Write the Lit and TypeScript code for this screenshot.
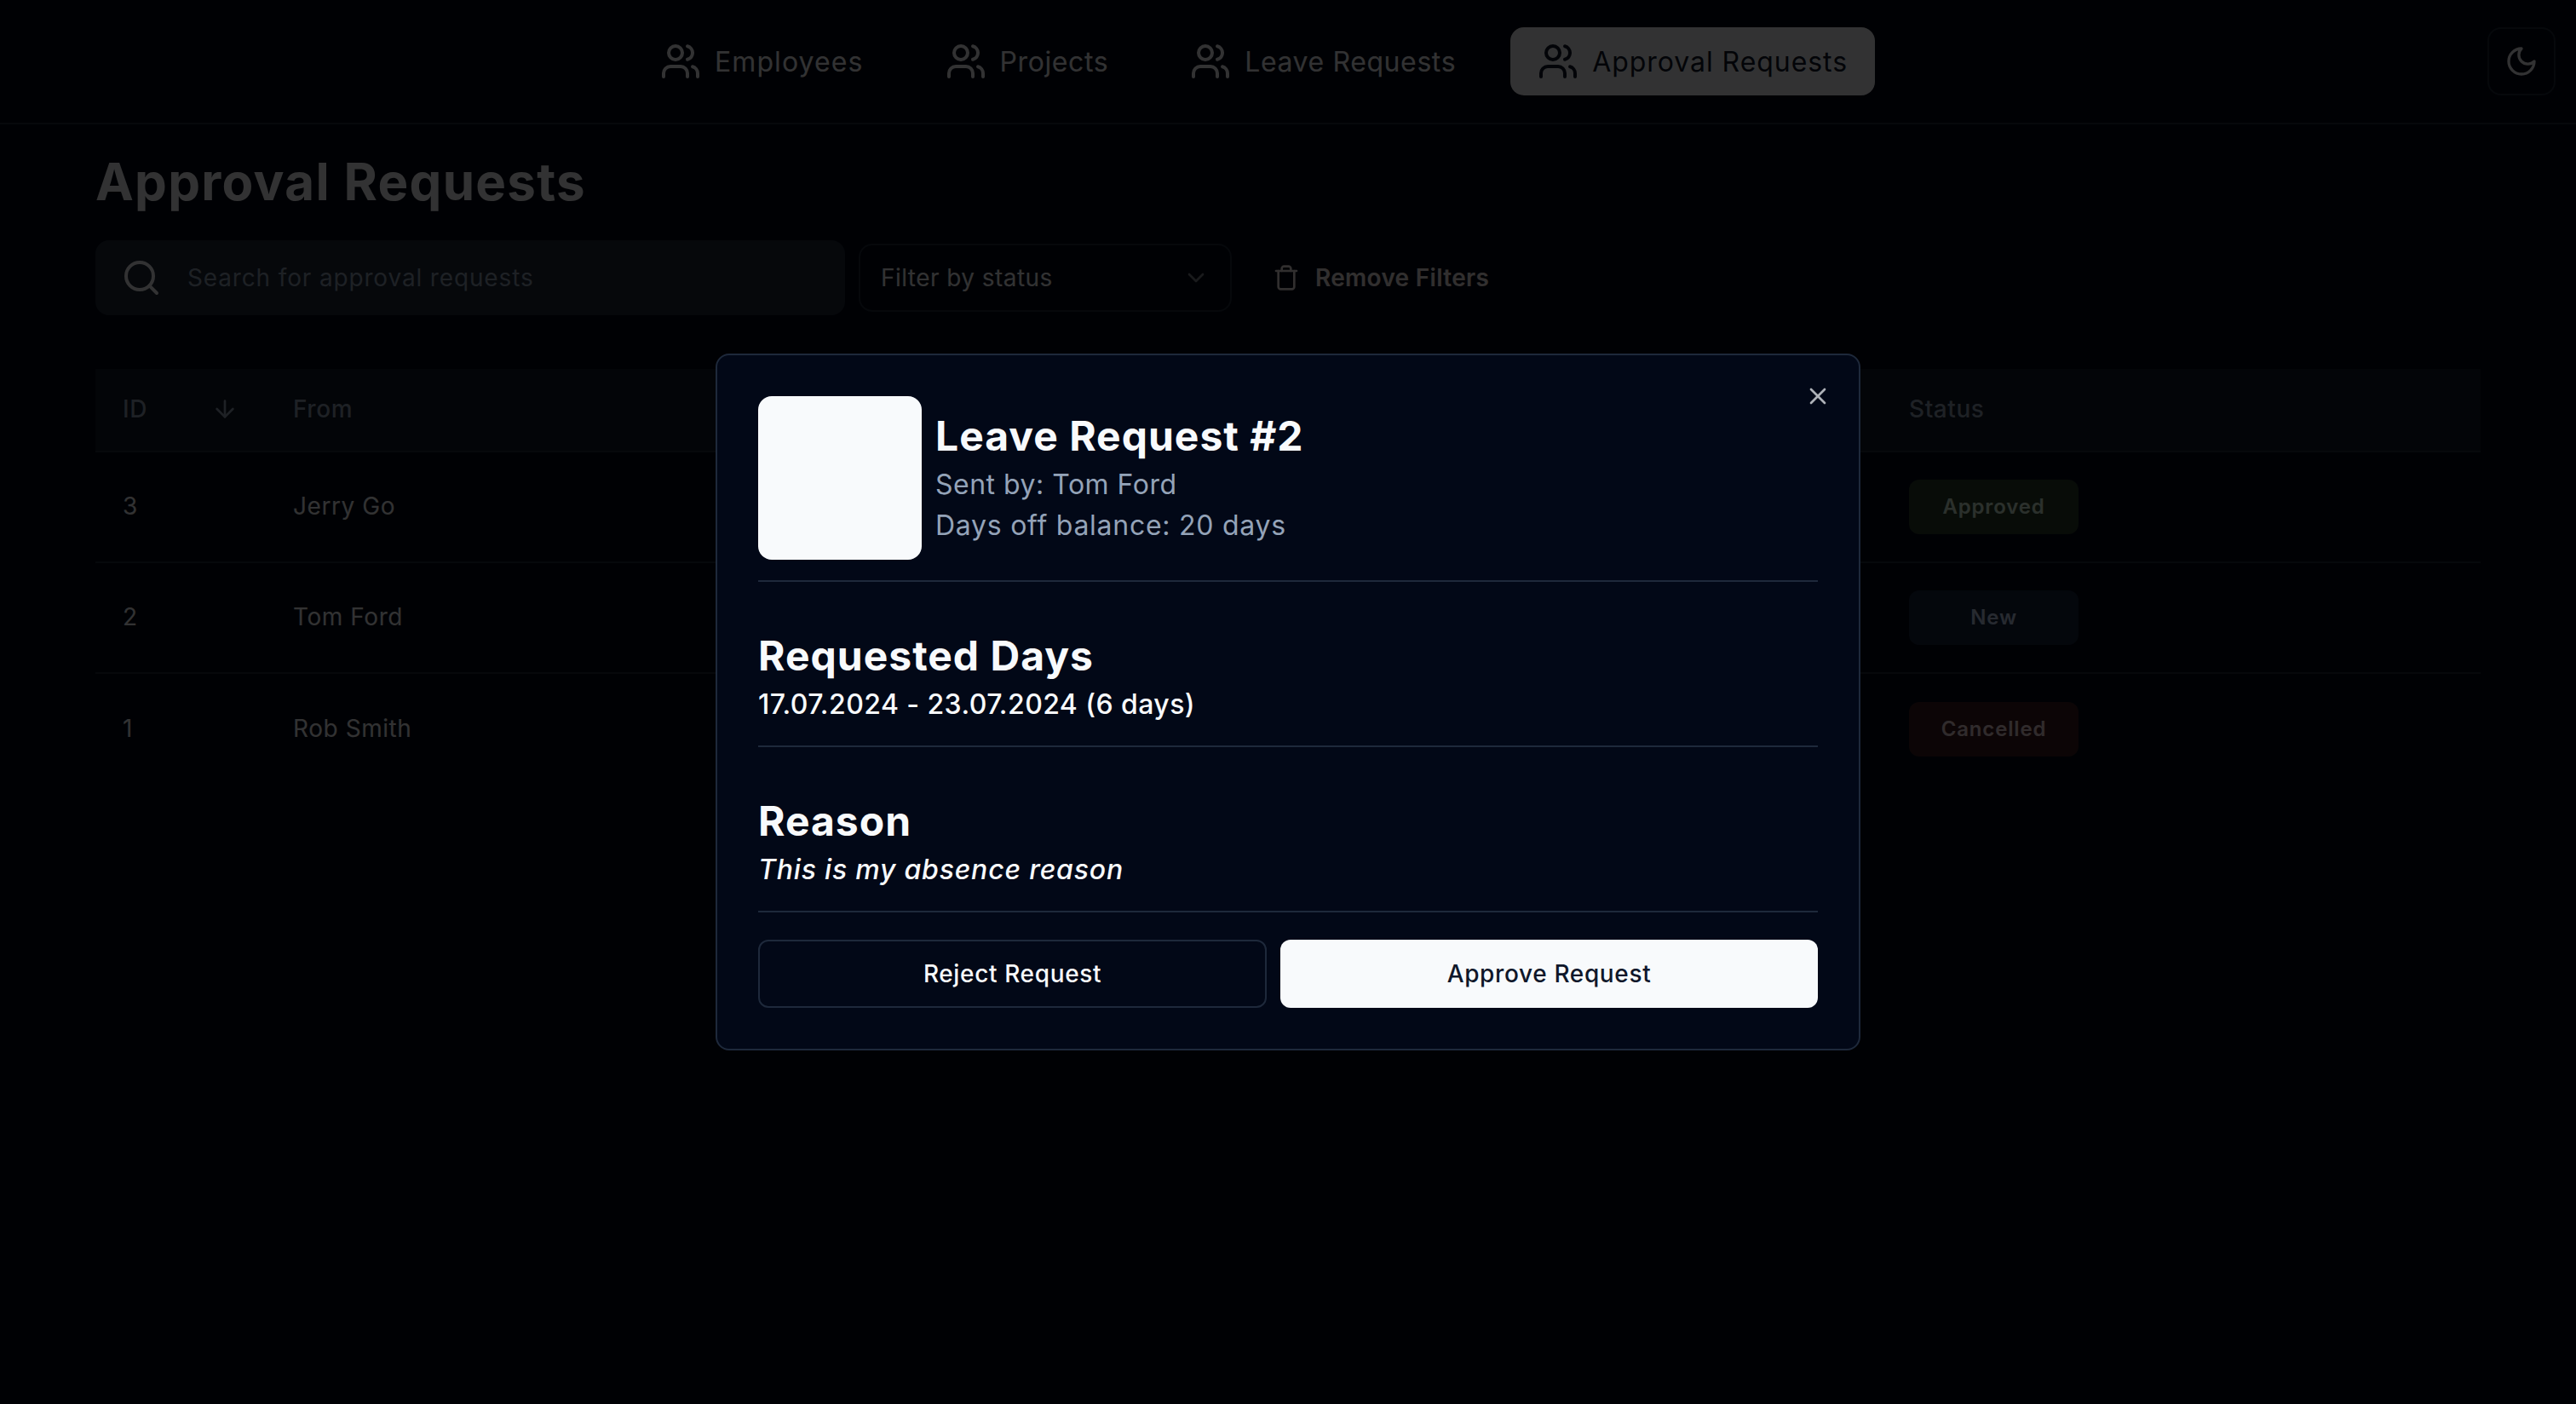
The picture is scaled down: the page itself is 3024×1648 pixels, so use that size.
import { LitElement, html, css, svg } from 'lit';
import { customElement } from 'lit/decorators.js';
import { classMap } from 'lit/directives/class-map.js';

type Status = 'approved' | 'new' | 'cancelled';

interface ApprovalRow {
  id: number;
  from: string;
  status: Status;
  label: string;
}

const NAV_ITEMS = ['Employees', 'Projects', 'Leave Requests', 'Approval Requests'];

const ROWS: ApprovalRow[] = [
  { id: 3, from: 'Jerry Go', status: 'approved', label: 'Approved' },
  { id: 2, from: 'Tom Ford', status: 'new', label: 'New' },
  { id: 1, from: 'Rob Smith', status: 'cancelled', label: 'Cancelled' },
];

const icon = (size: number, body: unknown) => html`
  <svg
    width=${size}
    height=${size}
    viewBox="0 0 24 24"
    fill="none"
    stroke="currentColor"
    stroke-width="2"
    stroke-linecap="round"
    stroke-linejoin="round"
  >
    ${body}
  </svg>
`;

const usersIcon = svg`
  <path d="M16 21v-2a4 4 0 0 0-4-4H6a4 4 0 0 0-4 4v2" />
  <circle cx="9" cy="7" r="4" />
  <path d="M22 21v-2a4 4 0 0 0-3-3.87" />
  <path d="M16 3.13a4 4 0 0 1 0 7.75" />
`;
const moonIcon = svg`<path d="M12 3a6 6 0 0 0 9 9 9 9 0 1 1-9-9Z" />`;
const searchIcon = svg`<circle cx="11" cy="11" r="8" /><path d="m21 21-4.3-4.3" />`;
const chevronIcon = svg`<path d="m6 9 6 6 6-6" />`;
const trashIcon = svg`
  <path d="M3 6h18" />
  <path d="M19 6v14c0 1-1 2-2 2H7c-1 0-2-1-2-2V6" />
  <path d="M8 6V4c0-1 1-2 2-2h4c1 0 2 1 2 2v2" />
`;
const arrowDownIcon = svg`<path d="M12 5v14" /><path d="m19 12-7 7-7-7" />`;
const closeIcon = svg`<path d="M18 6 6 18" /><path d="m6 6 12 12" />`;

@customElement('app-root')
export class AppRoot extends LitElement {
  static styles = css`
    :host {
      display: block;
      position: relative;
      min-height: 1648px;
      background: #020817;
      color: #f8fafc;
      font-family: Inter, 'Noto Sans', sans-serif;
    }

    /* top bar */
    .topbar {
      display: flex;
      align-items: center;
      height: 144px;
      padding: 0 24px;
      border-bottom: 2px solid #1e293b;
    }
    .nav {
      flex: 1;
      display: flex;
      justify-content: center;
      gap: 32px;
    }
    .nav-item {
      display: flex;
      align-items: center;
      gap: 16px;
      height: 80px;
      padding: 0 32px;
      border-radius: 16px;
      font-size: 32px;
      letter-spacing: 0.6px;
    }
    .nav-item:first-child {
      letter-spacing: 1.1px;
    }
    .nav-item.active {
      background: #f8fafc;
      color: #0f172a;
      letter-spacing: 0.95px;
    }
    .theme {
      display: flex;
      align-items: center;
      justify-content: center;
      box-sizing: border-box;
      width: 80px;
      height: 80px;
      border: 2px solid #1e293b;
      border-radius: 16px;
    }

    /* page */
    main {
      display: flex;
      flex-direction: column;
      padding: 31px 112px 0;
    }
    h1 {
      margin: 0;
      font-size: 60px;
      line-height: 72px;
      font-weight: 700;
      letter-spacing: 1.3px;
    }
    .filters {
      display: flex;
      align-items: center;
      gap: 16px;
      margin-top: 33px;
    }
    .search {
      display: flex;
      align-items: center;
      box-sizing: border-box;
      gap: 30px;
      width: 880px;
      height: 88px;
      padding-left: 30px;
      border-radius: 16px;
      background: #1e293b;
      color: #94a3b8;
    }
    .search svg {
      color: #f8fafc;
    }
    .search span {
      font-size: 28px;
      letter-spacing: 0.85px;
    }
    .select {
      display: flex;
      align-items: center;
      justify-content: space-between;
      box-sizing: border-box;
      width: 438px;
      height: 80px;
      padding: 0 24px;
      border: 2px solid #1e293b;
      border-radius: 16px;
      font-size: 28px;
      letter-spacing: 0.45px;
    }
    .select svg {
      opacity: 0.5;
    }
    .clear {
      display: flex;
      align-items: center;
      gap: 18px;
      margin-left: 32px;
      font-size: 28px;
      font-weight: 600;
      letter-spacing: 0.3px;
      color: #f5e9e9;
    }

    .table {
      margin-top: 63px;
      font-size: 28px;
    }
    .row {
      display: grid;
      grid-template-columns: 200px 1fr 703px;
      align-items: center;
      height: 130px;
      box-sizing: border-box;
      border-bottom: 2px solid #1e293b;
      letter-spacing: 0.56px;
    }
    .row:last-child {
      border-bottom: none;
    }
    .row > * {
      padding-left: 32px;
      padding-bottom: 2px;
    }
    .row > .status {
      display: flex;
      padding-bottom: 0;
    }
    .row.head {
      height: 98px;
      background: rgba(30, 41, 59, 0.5);
      color: #94a3b8;
      font-weight: 500;
    }
    .row.head .id {
      display: flex;
      align-items: center;
      justify-content: space-between;
      padding-right: 32px;
    }
    .badge {
      display: flex;
      align-items: center;
      justify-content: center;
      box-sizing: border-box;
      width: 199px;
      height: 64px;
      padding-bottom: 2px;
      border-radius: 12px;
      font-size: 24px;
      font-weight: 600;
      letter-spacing: 0.85px;
    }
    .badge.approved {
      background: #2a3c2a;
      color: #d8f0dc;
    }
    .badge.new {
      background: #18243f;
      color: #c0d0f0;
    }
    .badge.cancelled {
      background: #3c1c20;
      color: #f0d8dc;
    }

    /* dialog */
    .overlay {
      position: fixed;
      inset: 0;
      display: flex;
      align-items: center;
      justify-content: center;
      background: rgba(0, 0, 0, 0.8);
    }
    .dialog {
      position: relative;
      display: grid;
      gap: 24px;
      box-sizing: border-box;
      width: 1344px;
      padding: 48px;
      border: 2px solid #1e293b;
      border-radius: 16px;
      background: #020817;
    }
    .close {
      position: absolute;
      top: 32px;
      right: 32px;
      display: flex;
      opacity: 0.7;
    }
    .head-block {
      display: flex;
      gap: 16px;
    }
    .avatar {
      width: 192px;
      height: 192px;
      border-radius: 16px;
      background: #f8fafc;
    }
    .who {
      display: flex;
      flex-direction: column;
      justify-content: center;
    }
    h2,
    h3 {
      margin: -1px 0 1px;
      font-size: 48px;
      line-height: 64px;
      font-weight: 700;
      letter-spacing: 1px;
    }
    .meta {
      font-size: 32px;
      line-height: 48px;
      color: #94a3b8;
      letter-spacing: 0.5px;
    }
    .meta + .meta {
      letter-spacing: 0.74px;
    }
    hr {
      margin: 0;
      height: 2px;
      border: none;
      background: #1e293b;
    }
    .section {
      padding-top: 32px;
    }
    .detail {
      font-size: 32px;
      line-height: 48px;
      font-weight: 500;
      letter-spacing: 0.43px;
    }
    .detail.reason {
      font-style: italic;
      letter-spacing: 0.8px;
    }
    .actions {
      display: grid;
      grid-template-columns: 597fr 631fr;
      gap: 16px;
      margin-top: 8px;
    }
    .btn {
      display: flex;
      align-items: center;
      justify-content: center;
      box-sizing: border-box;
      height: 80px;
      border-radius: 12px;
      font-size: 28px;
      font-weight: 500;
      letter-spacing: 0.64px;
    }
    .btn.outline {
      border: 2px solid #1e293b;
    }
    .btn.primary {
      background: #f8fafc;
      color: #0f172a;
    }
  `;

  render() {
    return html`
      <header class="topbar">
        <nav class="nav">
          ${NAV_ITEMS.map(
            (label) => html`
              <div class=${classMap({ 'nav-item': true, active: label === 'Approval Requests' })}>
                ${icon(48, usersIcon)}
                <span>${label}</span>
              </div>
            `,
          )}
        </nav>
        <div class="theme">${icon(40, moonIcon)}</div>
      </header>

      <main>
        <h1>Approval Requests</h1>
        <div class="filters">
          <div class="search">${icon(48, searchIcon)}<span>Search for approval requests</span></div>
          <div class="select"><span>Filter by status</span>${icon(32, chevronIcon)}</div>
          <div class="clear">${icon(32, trashIcon)}<span>Remove Filters</span></div>
        </div>

        <div class="table">
          <div class="row head">
            <div class="id"><span>ID</span>${icon(32, arrowDownIcon)}</div>
            <div>From</div>
            <div>Status</div>
          </div>
          ${ROWS.map(
            (row) => html`
              <div class="row">
                <div>${row.id}</div>
                <div>${row.from}</div>
                <div class="status"><span class="badge ${row.status}">${row.label}</span></div>
              </div>
            `,
          )}
        </div>
      </main>

      <div class="overlay">
        <section class="dialog">
          <span class="close">${icon(32, closeIcon)}</span>
          <div class="head-block">
            <div class="avatar"></div>
            <div class="who">
              <h2>Leave Request #2</h2>
              <div class="meta">Sent by: Tom Ford</div>
              <div class="meta">Days off balance: 20 days</div>
            </div>
          </div>
          <hr />
          <div class="section">
            <h3>Requested Days</h3>
            <div class="detail">17.07.2024 - 23.07.2024 (6 days)</div>
          </div>
          <hr />
          <div class="section">
            <h3>Reason</h3>
            <div class="detail reason">This is my absence reason</div>
          </div>
          <hr />
          <div class="actions">
            <div class="btn outline">Reject Request</div>
            <div class="btn primary">Approve Request</div>
          </div>
        </section>
      </div>
    `;
  }
}
